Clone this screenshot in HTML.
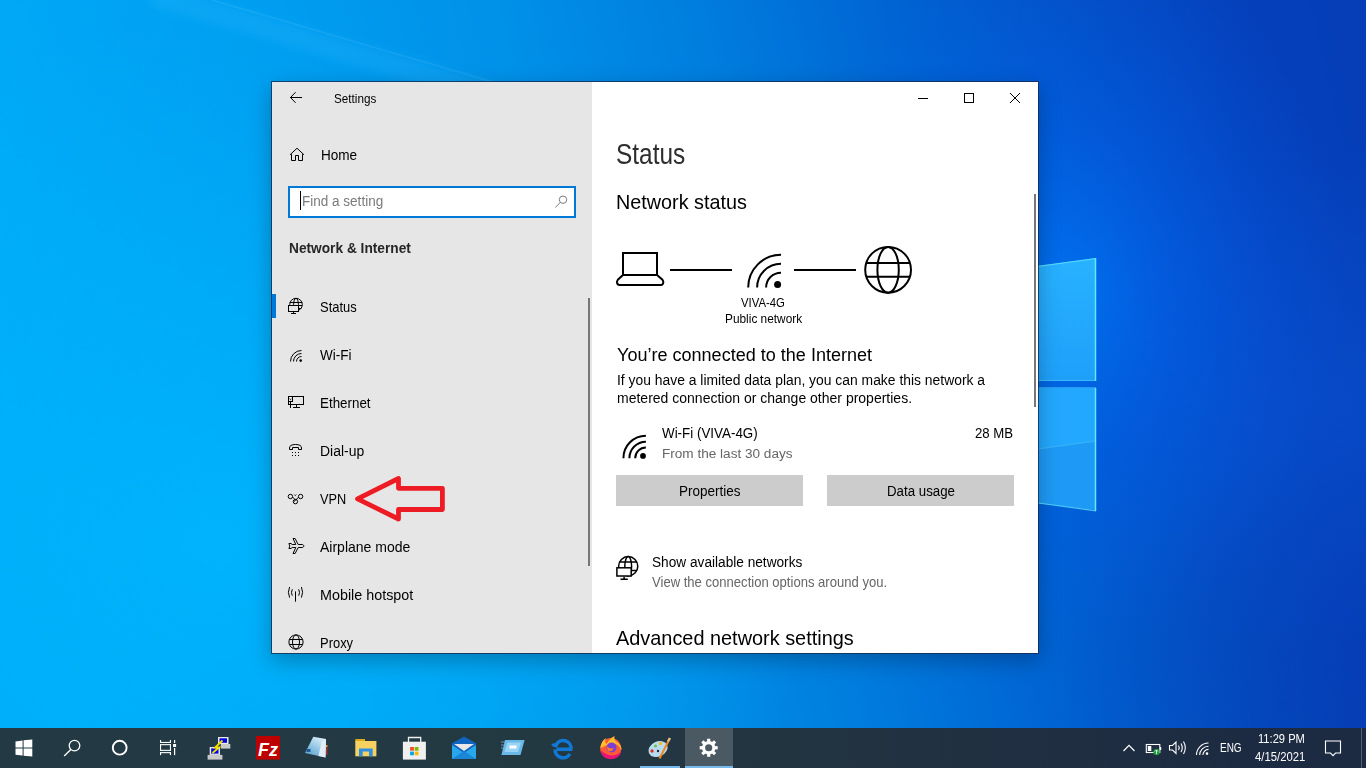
<!DOCTYPE html>
<html><head><meta charset="utf-8">
<style>
*{margin:0;padding:0;box-sizing:border-box}
html,body{width:1366px;height:768px;overflow:hidden;background:#0a7fe0}
body{position:relative;font-family:"Liberation Sans",sans-serif;color:#000}
.abs{position:absolute}
.t{position:absolute;line-height:1;white-space:nowrap;transform-origin:0 0}
#bg{position:absolute;left:0;top:0}
#win{position:absolute;left:271px;top:81px;width:768px;height:573px;border:1px solid rgba(20,42,78,.8);box-shadow:0 7px 20px rgba(0,0,0,.26);background:#fff;background-clip:padding-box;overflow:hidden}
#nav{position:absolute;left:0;top:0;width:320px;height:571px;background:#e6e6e6}
#main{position:absolute;left:320px;top:0;width:446px;height:571px;background:#fff}
#taskbar{position:absolute;left:0;top:728px;width:1366px;height:40px;background:linear-gradient(90deg,rgb(35,58,68) 0%,rgb(35,58,68) 22%,rgb(35,57,66) 39%,rgb(35,52,65) 57%,rgb(32,47,65) 74%,rgb(28,42,66) 96%,rgb(28,42,66) 100%)}
</style></head><body>
<svg id="bg" width="1366" height="768" viewBox="0 0 1366 768">
<defs>
<linearGradient id="bgg" gradientUnits="userSpaceOnUse" x1="0" y1="384" x2="1368" y2="83">
<stop offset="0" stop-color="rgb(0,172,248)"/>
<stop offset="0.265" stop-color="rgb(0,156,240)"/>
<stop offset="0.404" stop-color="rgb(0,145,233)"/>
<stop offset="0.547" stop-color="rgb(0,125,222)"/>
<stop offset="0.687" stop-color="rgb(0,99,210)"/>
<stop offset="0.823" stop-color="rgb(4,76,195)"/>
<stop offset="0.906" stop-color="rgb(5,65,188)"/>
<stop offset="1" stop-color="rgb(5,62,183)"/>
</linearGradient>
<radialGradient id="glow" gradientUnits="userSpaceOnUse" cx="1070" cy="290" r="250" gradientTransform="translate(1070 290) scale(1.1 1.45) translate(-1070 -290)">
<stop offset="0" stop-color="rgb(0,125,255)" stop-opacity="0.65"/>
<stop offset="0.45" stop-color="rgb(0,105,250)" stop-opacity="0.35"/>
<stop offset="1" stop-color="rgb(0,95,240)" stop-opacity="0"/>
</radialGradient>
<radialGradient id="blcyan" gradientUnits="userSpaceOnUse" cx="220" cy="540" r="520" gradientTransform="translate(220 540) scale(1.15 1) translate(-220 -540)">
<stop offset="0" stop-color="rgb(0,182,253)" stop-opacity="0.85"/>
<stop offset="0.55" stop-color="rgb(0,178,250)" stop-opacity="0.45"/>
<stop offset="1" stop-color="rgb(0,175,248)" stop-opacity="0"/>
</radialGradient>
<radialGradient id="midr" gradientUnits="userSpaceOnUse" cx="1330" cy="400" r="260">
<stop offset="0" stop-color="rgb(10,85,215)" stop-opacity="0.45"/>
<stop offset="1" stop-color="rgb(10,85,215)" stop-opacity="0"/>
</radialGradient>
<radialGradient id="brdark" gradientUnits="userSpaceOnUse" cx="1366" cy="768" r="330">
<stop offset="0" stop-color="rgb(5,50,160)" stop-opacity="0.3"/>
<stop offset="1" stop-color="rgb(5,50,160)" stop-opacity="0"/>
</radialGradient>
<filter id="blur6" x="-20%" y="-50%" width="140%" height="200%"><feGaussianBlur stdDeviation="5"/></filter>
<linearGradient id="pane1" x1="0" y1="0" x2="0" y2="1">
<stop offset="0" stop-color="rgb(40,178,255)"/>
<stop offset="1" stop-color="rgb(30,160,250)"/>
</linearGradient>
<linearGradient id="pane2" x1="0" y1="0" x2="0" y2="1">
<stop offset="0" stop-color="rgb(32,165,252)"/>
<stop offset="1" stop-color="rgb(28,150,245)"/>
</linearGradient>
</defs>
<rect width="1366" height="768" fill="url(#bgg)"/>
<rect width="1366" height="768" fill="url(#blcyan)"/>
<rect width="1366" height="768" fill="url(#midr)"/>
<rect width="1366" height="768" fill="url(#brdark)"/>
<rect width="1366" height="768" fill="url(#glow)"/>
<polygon points="150,-17 700,143 700,166 150,6" fill="rgba(60,200,255,0.16)" filter="url(#blur6)"/>
<line x1="212" y1="0" x2="700" y2="142.5" stroke="rgba(140,225,255,0.12)" stroke-width="1.5"/>
<polygon points="980,274 1096,258 1096,381 980,381" fill="url(#pane1)"/>
<polygon points="980,388 1096,388 1096,441 980,457" fill="rgb(34,168,254)"/>
<polygon points="980,457 1096,441 1096,510 980,497" fill="rgb(30,154,246)"/>
<line x1="1038" y1="449" x2="1096" y2="441" stroke="rgba(90,215,255,.5)" stroke-width="1"/>
<line x1="1038" y1="380.5" x2="1096" y2="380.5" stroke="rgba(90,215,255,.45)" stroke-width="1"/>
<line x1="1038" y1="387.5" x2="1096" y2="387.5" stroke="rgba(90,215,255,.45)" stroke-width="1"/>
<line x1="1095.5" y1="258" x2="1095.5" y2="381" stroke="rgb(100,232,255)" stroke-width="1.5"/>
<line x1="1095.5" y1="388" x2="1095.5" y2="511" stroke="rgb(100,232,255)" stroke-width="1.5"/>
<line x1="1038" y1="266.3" x2="1096" y2="258.5" stroke="rgba(100,232,255,.75)" stroke-width="1.2"/>
<line x1="1038" y1="503" x2="1096" y2="510.8" stroke="rgba(100,232,255,.75)" stroke-width="1.2"/>
</svg>

<div id="win">
  <div id="nav"></div>
  <div id="main"></div>
</div>


<div class="abs" style="left:288px;top:186px;width:288px;height:32px;border:2px solid #0078d7;background:#fff"></div>
<div class="abs" style="left:300px;top:191px;width:1px;height:19px;background:#000"></div>
<div class="abs" style="left:272px;top:294px;width:4px;height:24px;background:#0078d7"></div>
<div class="abs" style="left:588px;top:298px;width:2px;height:268px;background:#777"></div>
<div class="abs" style="left:1034px;top:194px;width:2px;height:213px;background:#777"></div>
<div class="abs" style="left:616px;top:475px;width:187px;height:31px;background:#ccc"></div>
<div class="abs" style="left:827px;top:475px;width:187px;height:31px;background:#ccc"></div>
<div class="t" style="left:334.00px;top:91.82px;font-size:13.08px;transform:scaleX(0.895)">Settings</div>
<div class="t" style="left:320.70px;top:147.72px;font-size:14.39px;transform:scaleX(0.943)">Home</div>
<div class="t" style="left:301.50px;top:193.94px;font-size:14.24px;transform:scaleX(0.950);color:#7a7a7a">Find a setting</div>
<div class="t" style="left:288.60px;top:240.94px;font-size:14.24px;transform:scaleX(0.963);color:#262626;font-weight:700">Network &amp; Internet</div>
<div class="t" style="left:319.60px;top:299.92px;font-size:14.97px;transform:scaleX(0.865)">Status</div>
<div class="t" style="left:320.00px;top:347.84px;font-size:14.24px;transform:scaleX(0.948)">Wi-Fi</div>
<div class="t" style="left:319.60px;top:395.84px;font-size:14.24px;transform:scaleX(0.940)">Ethernet</div>
<div class="t" style="left:319.60px;top:443.84px;font-size:14.24px;transform:scaleX(0.980)">Dial-up</div>
<div class="t" style="left:319.90px;top:491.74px;font-size:14.24px;transform:scaleX(0.895)">VPN</div>
<div class="t" style="left:320.00px;top:539.86px;font-size:14.10px;transform:scaleX(0.993)">Airplane mode</div>
<div class="t" style="left:319.80px;top:587.86px;font-size:14.10px;transform:scaleX(1.018)">Mobile hotspot</div>
<div class="t" style="left:319.60px;top:635.84px;font-size:14.24px;transform:scaleX(0.909)">Proxy</div>
<div class="t" style="left:615.80px;top:140.03px;font-size:28.78px;transform:scaleX(0.849);color:#2e2e2e">Status</div>
<div class="t" style="left:615.50px;top:192.09px;font-size:20.20px;transform:scaleX(0.980)">Network status</div>
<div class="t" style="left:741.40px;top:296.89px;font-size:12.65px;transform:scaleX(0.896)">VIVA-4G</div>
<div class="t" style="left:724.90px;top:313.02px;font-size:12.50px;transform:scaleX(0.949)">Public network</div>
<div class="t" style="left:616.90px;top:345.72px;font-size:18.75px;transform:scaleX(0.962)">You’re connected to the Internet</div>
<div class="t" style="left:616.90px;top:373.91px;font-size:13.81px;transform:scaleX(1.006)">If you have a limited data plan, you can make this network a</div>
<div class="t" style="left:616.90px;top:392.11px;font-size:13.81px;transform:scaleX(1.015)">metered connection or change other properties.</div>
<div class="t" style="left:662.20px;top:427.11px;font-size:13.81px;transform:scaleX(0.971)">Wi-Fi (VIVA-4G)</div>
<div class="t" style="left:662.40px;top:447.00px;font-size:13.23px;transform:scaleX(1.027);color:#666">From the last 30 days</div>
<div class="t" style="left:974.70px;top:425.62px;font-size:14.39px;transform:scaleX(0.919)">28 MB</div>
<div class="t" style="left:678.80px;top:483.62px;font-size:14.39px;transform:scaleX(0.938)">Properties</div>
<div class="t" style="left:886.70px;top:483.62px;font-size:14.39px;transform:scaleX(0.924)">Data usage</div>
<div class="t" style="left:652.30px;top:555.51px;font-size:13.81px;transform:scaleX(0.990)">Show available networks</div>
<div class="t" style="left:652.30px;top:574.66px;font-size:14.10px;transform:scaleX(0.927);color:#666">View the connection options around you.</div>
<div class="t" style="left:616.40px;top:627.55px;font-size:20.49px;transform:scaleX(0.971)">Advanced network settings</div>
<svg class="abs" style="left:0;top:0" width="1366" height="768" viewBox="0 0 1366 768" fill="none" stroke="#000" stroke-width="1">
<path d="M918 98.5H928"/>
<rect x="964.5" y="93.5" width="9" height="9"/>
<path d="M1010 93L1020 103M1010 103L1020 93"/>
<path d="M290.3 97.5H302M295.6 92.2L290.5 97.5L295.6 102.8"/>
<path d="M290 154.8L297 148.2L304 154.8M291.5 154.2V160.5H295.5V155.5H298.5V160.5H302.5V154.2"/>
<circle cx="563" cy="199.7" r="3.7" stroke="#7a7a7a"/>
<path d="M560.2 202.6L555.3 207.4" stroke="#7a7a7a"/>
<circle cx="296" cy="304.6" r="6.3"/>
<path d="M289.8 302.5H302.2"/>
<ellipse cx="296" cy="304.6" rx="2.4" ry="6.3"/>
<rect x="288.5" y="305.5" width="10" height="6" fill="#e6e6e6"/>
<path d="M293.5 311.5V313.5M291 313.5H296M298.5 305.5H302.3M298.5 308.5H301.2"/>
<path d="M290.5 361.5A11 11 0 0 1 301.5 350.5M293.5 361.5A8 8 0 0 1 301.5 353.5M296.5 361.5A5 5 0 0 1 301.5 356.5"/>
<circle cx="300.7" cy="360.6" r="1.3" fill="#000" stroke="none"/>
<rect x="288.5" y="396.5" width="15" height="8"/>
<rect x="288.5" y="396.5" width="4" height="5" fill="#e6e6e6"/>
<path d="M289.6 398.8L290.5 399.7L291.4 398.8M290.5 401.5V408M296.5 404.5V407.5M293 407.5H300"/>
<path d="M289.5 449.5V448Q289.5 444.5 295.5 444.5Q301.5 444.5 301.5 448V449.5H298.5V447.5H292.5V449.5Z"/>
<g fill="#000" stroke="none">
<rect x="292" y="452" width="1" height="1"/><rect x="295" y="452" width="1" height="1"/><rect x="298" y="452" width="1" height="1"/>
<rect x="292" y="455" width="1" height="1"/><rect x="295" y="455" width="1" height="1"/><rect x="298" y="455" width="1" height="1"/>
</g>
<circle cx="290.4" cy="496.5" r="2.2"/>
<circle cx="300.6" cy="496.5" r="2.2"/>
<circle cx="295.4" cy="501.6" r="2.2"/>
<path d="M292.5 497L295 499.5M298.6 497.3L294 501.5M294.4 494.6L295.3 495.5L296.2 494.6"/>
<path d="M288.9 543.5H291L292.2 544.5H295.8L293 538.5H295.1L298.2 544.5H302.2C303.2 544.5 303.8 545.4 303.8 546C303.8 546.6 303.2 547.5 302.2 547.5H298.2L295.1 553.5H293L295.8 547.5H292.2L291 548.5H288.9L289.8 546Z"/>
<path d="M295.5 591.4V601.7M292.3 589.3Q290.6 592.5 292.3 595.7M298.7 589.3Q300.4 592.5 298.7 595.7M289.6 587Q287.2 592.3 289.6 597.6M301.4 587Q303.8 592.3 301.4 597.6"/>
<circle cx="296" cy="642" r="7.1"/>
<ellipse cx="296" cy="642" rx="3.5" ry="7.1"/>
<path d="M289.3 639.5H302.7M289.3 644.5H302.7"/>
<g stroke-width="2">
<rect x="623" y="253" width="34" height="22"/>
<path d="M623 275L617.8 279.8Q616.8 281 617 282.5Q617.5 285 619.5 285H661Q663 285 663.3 282.5Q663.5 281 662.5 279.8L657 275"/>
<path d="M670 270H732M794 270H856"/>
<path d="M748.2 287.6A32.8 32.8 0 0 1 781 254.8M757.1 287.6A23.9 23.9 0 0 1 781 263.7M766.1 287.6A14.9 14.9 0 0 1 781 272.7"/>
<circle cx="888.1" cy="269.8" r="22.9"/>
<ellipse cx="888.1" cy="269.8" rx="10.7" ry="22.9"/>
<path d="M866.2 263H910M866.2 276.7H910"/>
<path d="M623.4 458.2A22.5 22.5 0 0 1 645.9 435.7M629.4 458.2A16.5 16.5 0 0 1 645.9 441.7M635.2 458.2A10.7 10.7 0 0 1 645.9 447.5"/>
</g>
<circle cx="777.6" cy="284.4" r="3.5" fill="#000" stroke="none"/>
<circle cx="643" cy="455.9" r="2.9" fill="#000" stroke="none"/>
<g stroke-width="1.5">
<circle cx="628.2" cy="566.2" r="9.6"/>
<ellipse cx="628.2" cy="566.2" rx="3.4" ry="9.6"/>
<path d="M619.5 562.1H637M631.2 570.5H637"/>
<rect x="616.9" y="567.8" width="14.3" height="8.2" fill="#fff"/>
<path d="M624.1 576.7V579.2M620.5 579.2H627.8"/>
</g>
<polygon points="357.5,498.8 398.5,478.5 398.5,488.3 442.4,488.3 442.4,509.5 398.5,509.5 398.5,519" stroke="#ed1c24" stroke-width="4.8" stroke-linejoin="round"/>
</svg>

<div id="taskbar"></div>
<div class="abs" style="left:685px;top:728px;width:48px;height:40px;background:rgb(75,89,99)"></div>
<div class="abs" style="left:685px;top:766px;width:48px;height:2px;background:#76b9ed"></div>
<div class="abs" style="left:640px;top:766px;width:40px;height:2px;background:#76b9ed"></div>
<div class="abs" style="left:1361px;top:728px;width:1px;height:40px;background:rgba(255,255,255,.25)"></div>
<div class="t" style="left:1219.80px;top:742.02px;font-size:12.50px;transform:scaleX(0.797);color:#fff">ENG</div>
<div class="t" style="left:1257.80px;top:733.17px;font-size:12.79px;transform:scaleX(0.872);color:#fff">11:29 PM</div>
<div class="t" style="left:1255.10px;top:750.69px;font-size:12.65px;transform:scaleX(0.894);color:#fff">4/15/2021</div>
<svg class="abs" style="left:0;top:728px" width="1366" height="40" viewBox="0 728 1366 40" fill="none" stroke="#fff" stroke-width="1">
<!-- start -->
<g fill="#fff" stroke="none">
<polygon points="15.5,741.4 22.6,740.5 22.6,747.5 15.5,747.5"/>
<polygon points="23.6,740.3 32.3,739.4 32.3,747.5 23.6,747.5"/>
<polygon points="15.5,748.5 22.6,748.5 22.6,755.5 15.5,754.7"/>
<polygon points="23.6,748.5 32.3,748.5 32.3,756.6 23.6,755.7"/>
</g>
<!-- search -->
<circle cx="74.5" cy="745.6" r="5.3" stroke-width="1.3"/>
<path d="M70.8 749.5L64.2 756" stroke-width="1.3"/>
<!-- cortana -->
<circle cx="119.7" cy="747.7" r="6.9" stroke-width="1.9"/>
<!-- task view -->
<g fill="#fff" stroke="none">
<rect x="160" y="740" width="1.1" height="3"/><rect x="160" y="741.9" width="11" height="1.1"/><rect x="169.9" y="740" width="1.1" height="3"/>
<rect x="160" y="744.1" width="11" height="1.1"/><rect x="160" y="749.8" width="11" height="1.1"/><rect x="160" y="744.1" width="1.1" height="6.8"/><rect x="169.9" y="744.1" width="1.1" height="6.8"/>
<rect x="160" y="752.1" width="11" height="1.1"/><rect x="160" y="752.1" width="1.1" height="3"/><rect x="169.9" y="752.1" width="1.1" height="3"/>
<rect x="174" y="740" width="1.2" height="3"/><rect x="173.1" y="744" width="3" height="3"/><rect x="174" y="748" width="1.2" height="7.1"/>
</g>
<!-- putty -->
<g stroke="none">
<rect x="218" y="737" width="10.5" height="7" fill="#e8e8e8"/>
<rect x="219.5" y="738.3" width="7.5" height="4.5" fill="#0000e0"/>
<rect x="220.8" y="744" width="9.5" height="4.6" fill="#c8c8c8"/>
<rect x="209.7" y="747" width="10.3" height="7.9" fill="#e8e8e8"/>
<rect x="211.2" y="748.3" width="7.3" height="5.3" fill="#0000e0"/>
<rect x="207.6" y="754.9" width="14.8" height="4.7" fill="#c8c8c8"/>
</g>
<path d="M222.5 740.5L215 747.5L219 747.5L212.5 753" stroke="#f0e000" stroke-width="1.8"/>
<!-- filezilla -->
<rect x="256" y="736" width="24" height="23.6" fill="#bf0000" stroke="none"/>
<text x="268" y="755.5" text-anchor="middle" font-family="Liberation Sans" font-weight="700" font-style="italic" font-size="18" fill="#fff" stroke="none">Fz</text>
<!-- notepad -->
<defs><linearGradient id="npg" x1="0.8" y1="0" x2="0.2" y2="1"><stop offset="0" stop-color="rgb(225,242,252)"/><stop offset="0.5" stop-color="rgb(150,200,230)"/><stop offset="1" stop-color="rgb(90,160,205)"/></linearGradient></defs>
<g stroke="none">
<polygon points="313.3,736.7 326,739 325.5,757.5 305,753" fill="url(#npg)"/>
<polygon points="321.5,742 326,739 325.5,757.5 318.5,756" fill="rgb(225,236,244)"/>
<rect x="326" y="745" width="1.4" height="10" fill="rgb(170,50,40)"/>
<rect x="326" y="745" width="1.4" height="2" fill="rgb(210,170,60)"/>
<rect x="306.5" y="749" width="4" height="3" fill="rgb(30,90,150)"/>
</g>
<!-- explorer -->
<g stroke="none">
<rect x="355.3" y="739" width="9.7" height="3" fill="#dca81c"/>
<rect x="355.3" y="741" width="21.1" height="15.3" fill="#f8d260"/>
<path d="M359 748.6H372.7V756.3H369V751.6H362.7V756.3H359Z" fill="#2f8fe0"/>
</g>
<!-- store -->
<g stroke="none">
<rect x="402.9" y="741.7" width="23" height="17.9" fill="#f0f0f0"/>
<rect x="410.1" y="747" width="3.8" height="3.7" fill="#f25022"/>
<rect x="414.7" y="747" width="3.8" height="3.7" fill="#7fba00"/>
<rect x="410.1" y="751.6" width="3.8" height="3.7" fill="#00a4ef"/>
<rect x="414.7" y="751.6" width="3.8" height="3.7" fill="#ffb900"/>
</g>
<path d="M408.5 742V737.5H420.7V742" stroke="#f0f0f0" stroke-width="1.3"/>
<!-- mail -->
<g stroke="none">
<polygon points="452,743.3 464,736.4 476,743.3 476,759 452,759" fill="#0f64c0"/>
<polygon points="454,744 474,744 464,751" fill="#e8e8e8"/>
<polygon points="452,745 464,753 476,745 476,759 452,759" fill="#28a8ea"/>
<polygon points="452,759 464,751 476,759" fill="#1a86d8"/>
</g>
<!-- remote app -->
<g stroke="none">
<polygon points="505,740 524.6,740 520.5,754.9 501.4,754.9" fill="#6ab8e8"/>
<polygon points="507.5,742.5 521,742.5 518,752 504.5,752" fill="#9ad4f4"/>
<rect x="509.5" y="745.5" width="7" height="3" fill="#fff"/>
</g>
<path d="M501 742H505M501 745H504M501 748H503" stroke="#7aaed0" stroke-width=".8"/>
<!-- edge -->
<g stroke="#0f78d4" stroke-width="3.6" fill="none">
<path d="M555.2 749.5A7.8 7.8 0 0 0 569.8 753.8"/>
<path d="M571 749.3A7.8 7.8 0 0 0 556 745.5Q554 744.5 552.5 746"/>
<path d="M556.5 749.3H572.3"/>
</g>
<!-- firefox -->
<g stroke="none">
<circle cx="610.8" cy="748.5" r="10.6" fill="#ff5a36"/>
<path d="M600.5 748Q601 741 606 738Q604 742 606.5 744Q610 738 614.5 736Q613.5 740 617 742Q621.5 745 621.4 750Q619 744 612 743Z" fill="#ffbd2e"/>
<path d="M600.5 750Q602 759 611 759.2Q619.5 759 621.3 751Q616 757 609 755Q603 753 600.5 750Z" fill="#e8137a"/>
<circle cx="611.5" cy="747.5" r="5" fill="#7b3fd6"/>
<path d="M606.5 746Q609 749 614 748.5Q612 752 608 751Z" fill="#ff7a2a"/>
</g>
<!-- paint -->
<g stroke="none">
<ellipse cx="658" cy="749" rx="10" ry="7.5" fill="#b8dcf0" transform="rotate(-25 658 749)"/>
<circle cx="652" cy="751" r="1.7" fill="#e03020"/>
<circle cx="655.5" cy="746" r="1.5" fill="#70c040"/>
<circle cx="660.5" cy="743.5" r="1.8" fill="#f0c020"/>
<circle cx="658" cy="751" r="1.2" fill="#223"/>
</g>
<path d="M659.5 758.5L668.5 741" stroke="#f08820" stroke-width="2"/>
<path d="M668 741.5L670 738" stroke="#e8c080" stroke-width="2.5"/>
<!-- settings gear -->
<g transform="translate(708.7 747.75)">
<circle r="5.2" stroke-width="3.2"/>
<g fill="#fff" stroke="none">
<rect x="-1.6" y="-9" width="3.2" height="4"/>
<rect x="-1.6" y="5" width="3.2" height="4"/>
<rect x="-9" y="-1.6" width="4" height="3.2"/>
<rect x="5" y="-1.6" width="4" height="3.2"/>
<g transform="rotate(45)">
<rect x="-1.6" y="-9" width="3.2" height="4"/>
<rect x="-1.6" y="5" width="3.2" height="4"/>
<rect x="-9" y="-1.6" width="4" height="3.2"/>
<rect x="5" y="-1.6" width="4" height="3.2"/>
</g>
</g>
</g>
<!-- tray chevron -->
<path d="M1123.5 751L1129 745.3L1134.5 751" stroke-width="1.2"/>
<!-- battery -->
<rect x="1146.3" y="744.5" width="13.5" height="8" stroke-width="1.1"/>
<rect x="1147.8" y="746" width="3.5" height="5" fill="#fff" stroke="none"/>
<rect x="1160" y="747" width="1.2" height="3" fill="#fff" stroke="none"/>
<circle cx="1156.5" cy="752" r="3.2" fill="#1a9a3a" stroke="none"/>
<path d="M1156.5 750V754M1155 751.5L1156.5 750L1158 751.5" stroke-width=".8"/>
<!-- volume -->
<path d="M1169.5 745.5H1172.5L1176 742V753.5L1172.5 750H1169.5Z" stroke-width="1.1"/>
<path d="M1178.5 745.5Q1180 747.75 1178.5 750M1181 743.5Q1183.5 747.75 1181 752M1183.5 741.5Q1187 747.75 1183.5 754" stroke-width="1.1"/>
<!-- wifi tray -->
<path d="M1196.5 755A12 12 0 0 1 1208.5 743M1199.7 755A8.8 8.8 0 0 1 1208.5 746.2M1202.9 755A5.6 5.6 0 0 1 1208.5 749.4" stroke-width="1.1"/>
<circle cx="1207" cy="753.6" r="1.3" fill="#fff" stroke="none"/>
<!-- notification -->
<path d="M1325.5 741H1340.5V753H1335.5L1333 755.6L1330.5 753H1325.5Z" stroke-width="1.1"/>
</svg>
</body></html>
